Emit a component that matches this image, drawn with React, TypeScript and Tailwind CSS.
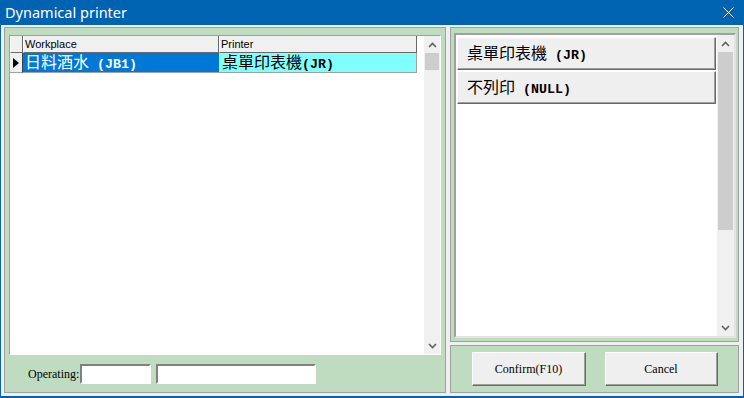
const cjk = { fontFamily: '"Noto Sans CJK TC", "Noto Sans", sans-serif' }

function Chevron({ down = false }: { down?: boolean }) {
  return (
    <svg width="9" height="6" viewBox="0 0 9 6" className={down ? 'rotate-180' : ''}>
      <path d="M1 5 L4.5 1.5 L8 5" fill="none" stroke="#606060" strokeWidth="1.6" />
    </svg>
  )
}

function ScrollBar({ thumb, className }: { thumb: string; className: string }) {
  return (
    <div className={`flex flex-col bg-[#f0f0f0] ${className}`}>
      <div className="h-[17px] flex items-center justify-center">
        <Chevron />
      </div>
      <div className={`bg-[#cdcdcd] mx-px ${thumb}`} />
      <div className="flex-1" />
      <div className="h-[17px] flex items-center justify-center">
        <Chevron down />
      </div>
    </div>
  )
}

function Mixed({ han, code, space = false }: { han: string; code: string; space?: boolean }) {
  return (
    <span className="whitespace-pre leading-none">
      <span className="text-[16px]" style={cjk}>{han}</span>
      <span className="text-[13.3px] font-bold font-['Liberation_Mono',monospace]">
        {space ? ' ' + code : code}
      </span>
    </span>
  )
}

function RaisedButton({ children, className }: { children: React.ReactNode; className: string }) {
  return (
    <div
      className={`bg-[#efefef] border border-t-white border-l-white border-r-[#696969] border-b-[#696969] shadow-[inset_-1px_-1px_0_#a0a0a0] ${className}`}
    >
      {children}
    </div>
  )
}

export default function App() {
  return (
    <div className="w-[744px] h-[398px] flex flex-col bg-[#0063b1] overflow-hidden font-['Liberation_Sans',sans-serif]">
      {/* title bar */}
      <div className="h-[25px] flex items-center justify-between pl-[5px] pr-[10px] text-white">
        <span className="text-[14.5px] font-['Noto_Sans',sans-serif]">Dynamical printer</span>
        <svg width="11" height="11" viewBox="0 0 11 11">
          <path d="M0.5 0.5 L10.5 10.5 M10.5 0.5 L0.5 10.5" stroke="white" strokeWidth="1" />
        </svg>
      </div>

      <div className="flex-1 mx-px mb-[2px] bg-[#f0f0f0] flex gap-[4px] pl-[3px] pr-[4px] pt-[2px] pb-[3px]">
        {/* left panel */}
        <div className="w-[442px] flex flex-col bg-[#c0dcc0] border border-[#a0a0a0] pt-[7px] px-[4px]">
          <div className="h-[320px] flex bg-white border border-t-[#a0a0a0] border-l-[#a0a0a0] border-r-white border-b-white">
            <div className="flex-1 flex flex-col">
              <div className="flex h-[17px] text-[11px] text-black">
                <div className="w-[13px] bg-[#f0f0f0] border-r border-b border-[#696969] border-l border-l-white" />
                <div className="w-[196px] bg-[#f0f0f0] border-r border-b border-[#696969] border-l border-l-white pl-[1px] leading-[16px]">
                  Workplace
                </div>
                <div className="w-[198px] bg-[#f0f0f0] border-r border-b border-[#696969] border-l border-l-white pl-[1px] leading-[16px]">
                  Printer
                </div>
              </div>
              <div className="flex h-[20px]">
                <div className="w-[13px] bg-[#f0f0f0] border-r border-r-[#404040] border-b border-b-[#a0a0a0] flex items-center justify-center">
                  <svg width="6" height="10" viewBox="0 0 6 10">
                    <path d="M0 0 L6 5 L0 10 Z" fill="black" />
                  </svg>
                </div>
                <div className="w-[196px] bg-[#0078d7] text-white border-b border-[#a0a0a0] flex items-center pl-[2px]">
                  <Mixed han="日料酒水" code="(JB1)" space />
                </div>
                <div className="w-[198px] bg-[#80ffff] text-black border-r border-b border-[#a0a0a0] flex items-center pl-[3px]">
                  <Mixed han="桌單印表機" code="(JR)" />
                </div>
              </div>
            </div>
            <ScrollBar thumb="h-[17px]" className="w-[16px]" />
          </div>

          <div className="flex-1 flex items-center pl-[19px] gap-[1px] font-['Liberation_Serif',serif] text-[12px] text-black">
            <span>Operating:</span>
            <div className="w-[71px] h-[20px] bg-white border-2 border-t-[#808080] border-l-[#808080] border-r-white border-b-white" />
            <div className="w-[160px] h-[20px] ml-[4px] bg-white border-2 border-t-[#808080] border-l-[#808080] border-r-white border-b-white" />
          </div>
        </div>

        {/* right column */}
        <div className="flex-1 flex flex-col gap-[3px]">
          <div className="h-[315px] bg-[#c0dcc0] border border-[#a0a0a0] pt-[5px] pb-[3px] pl-[3px] pr-[2px] flex">
            <div className="flex-1 flex bg-white border-2 border-t-[#a0a0a0] border-l-[#a0a0a0] border-r-[#e3e3e3] border-b-[#e3e3e3]">
              <div className="flex-1 flex flex-col gap-px pt-[2px] px-px">
                <RaisedButton className="h-[33px] flex items-center pl-[9px] text-black">
                  <Mixed han="桌單印表機" code="(JR)" space />
                </RaisedButton>
                <RaisedButton className="h-[33px] flex items-center pl-[9px] text-black">
                  <Mixed han="不列印" code="(NULL)" space />
                </RaisedButton>
              </div>
              <ScrollBar thumb="h-[178px]" className="w-[17px]" />
            </div>
          </div>

          <div className="flex-1 bg-[#c0dcc0] border border-[#a0a0a0] flex items-center justify-center gap-[19px] font-['Liberation_Serif',serif] text-[12px] text-black">
            <RaisedButton className="w-[114px] h-[34px] flex items-center justify-center">Confirm(F10)</RaisedButton>
            <RaisedButton className="w-[113px] h-[34px] flex items-center justify-center">Cancel</RaisedButton>
          </div>
        </div>
      </div>
    </div>
  )
}
